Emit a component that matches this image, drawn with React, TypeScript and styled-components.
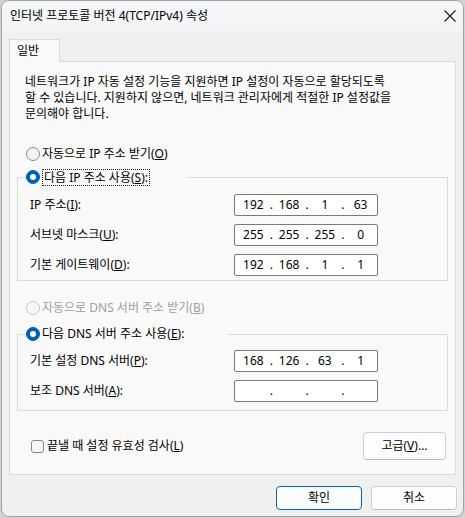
import React from "react";
import styled, { createGlobalStyle } from "styled-components";

const GlobalStyle = createGlobalStyle`
  html, body {
    margin: 0;
    padding: 0;
    background: #ced3ce;
  }
  body {
    font-family: "Noto Sans", "Noto Sans CJK KR", sans-serif;
    font-size: 12px;
    color: #000;
  }
`;

type Address = string[];

interface IpRow {
  label: React.ReactNode;
  value: Address;
}

const ipRows: IpRow[] = [
  { label: <>IP 주소(<u>I</u>):</>, value: ["192", "168", "1", "63"] },
  { label: <>서브넷 마스크(<u>U</u>):</>, value: ["255", "255", "255", "0"] },
  { label: <>기본 게이트웨이(<u>D</u>):</>, value: ["192", "168", "1", "1"] },
];

const dnsRows: IpRow[] = [
  { label: <>기본 설정 DNS 서버(<u>P</u>):</>, value: ["168", "126", "63", "1"] },
  { label: <>보조 DNS 서버(<u>A</u>):</>, value: ["", "", "", ""] },
];

const IpField: React.FC<{ value: Address }> = ({ value }) => (
  <IpBox>
    {value.map((octet, i) => (
      <React.Fragment key={i}>
        <Octet>{octet}</Octet>
        {i < 3 && <Dot>.</Dot>}
      </React.Fragment>
    ))}
  </IpBox>
);

const AddressRows: React.FC<{ rows: IpRow[]; $top: number; $bottom: number }> = ({
  rows,
  $top,
  $bottom,
}) => (
  <RowGrid $top={$top} $bottom={$bottom}>
    {rows.map((row, i) => (
      <React.Fragment key={i}>
        <FieldLabel>{row.label}</FieldLabel>
        <IpField value={row.value} />
      </React.Fragment>
    ))}
  </RowGrid>
);

const App: React.FC = () => {
  return (
    <>
      <GlobalStyle />
      <Window>
        <TitleBar>
          <Title>인터넷 프로토콜 버전 4(TCP/IPv4) 속성</Title>
          <CloseIcon width="12" height="12" viewBox="0 0 12 12">
            <path d="M0.5 0.5 L11.5 11.5 M11.5 0.5 L0.5 11.5" stroke="#1a1a1a" strokeWidth="1.1" fill="none" />
          </CloseIcon>
        </TitleBar>

        <Body>
          <TabStrip>
            <Tab>일반</Tab>
          </TabStrip>

          <Panel>
            <Description>
              <DescLine>네트워크가 IP 자동 설정 기능을 지원하면 IP 설정이 자동으로 할당되도록</DescLine>
              <DescLine>할 수 있습니다. 지원하지 않으면, 네트워크 관리자에게 적절한 IP 설정값을</DescLine>
              <DescLine>문의해야 합니다.</DescLine>
            </Description>

            <RadioRow $top={23}>
              <Radio />
              <span>
                자동으로 IP 주소 받기(<u>O</u>)
              </span>
            </RadioRow>

            <Group $top={5}>
              <GroupLegend $width={161}>
                <RadioRow>
                  <Radio $checked />
                  <FocusText>
                    다음 IP 주소 사용(<u>S</u>):
                  </FocusText>
                </RadioRow>
              </GroupLegend>
              <AddressRows rows={ipRows} $top={8} $bottom={4} />
            </Group>

            <RadioRow $top={18} $disabled>
              <Radio $disabled />
              <span>
                자동으로 DNS 서버 주소 받기(<u>B</u>)
              </span>
            </RadioRow>

            <Group $top={8}>
              <GroupLegend $width={202}>
                <RadioRow>
                  <Radio $checked />
                  <span>
                    다음 DNS 서버 주소 사용(<u>E</u>):
                  </span>
                </RadioRow>
              </GroupLegend>
              <AddressRows rows={dnsRows} $top={7} $bottom={8} />
            </Group>

            <BottomRow>
              <CheckRow>
                <Checkbox />
                <span>
                  끝낼 때 설정 유효성 검사(<u>L</u>)
                </span>
              </CheckRow>
              <Button $width={83} $height={28}>
                고급(<u>V</u>)...
              </Button>
            </BottomRow>
          </Panel>

          <Footer>
            <Button $primary>확인</Button>
            <Button>취소</Button>
          </Footer>
        </Body>
      </Window>
    </>
  );
};

const Window = styled.div`
  box-sizing: border-box;
  width: 463px;
  height: 517px;
  margin-left: 1px;
  border: 1px solid #a3a3a3;
  border-radius: 8px;
  background: #f0f0f0;
  overflow: hidden;
  display: flex;
  flex-direction: column;
`;

const TitleBar = styled.div`
  height: 30px;
  flex: none;
  display: flex;
  align-items: center;
  padding: 0 7px 0 8px;
  background: #f3f5f7;
`;

const Title = styled.div`
  font-size: 12px;
  line-height: 16px;
  color: #000;
`;

const CloseIcon = styled.svg`
  margin-left: auto;
  display: block;
`;

const Body = styled.div`
  padding: 8px 7px 0;
  display: flex;
  flex-direction: column;
`;

const TabStrip = styled.div`
  display: flex;
`;

const Tab = styled.div`
  box-sizing: border-box;
  position: relative;
  width: 51px;
  height: 23px;
  margin-bottom: -1px;
  padding: 3px 0 0 7px;
  border: 1px solid #d9d9d9;
  border-bottom: none;
  background: #f9f9f9;
  line-height: 16px;
`;

const Panel = styled.div`
  box-sizing: border-box;
  height: 414px;
  border: 1px solid #d9d9d9;
  background: #f9f9f9;
  display: flex;
  flex-direction: column;
`;

const Description = styled.div`
  margin: 12px 0 0 15px;
  display: flex;
  flex-direction: column;
`;

const DescLine = styled.div`
  height: 16px;
  line-height: 16px;
  white-space: nowrap;
`;

const RadioRow = styled.label<{ $top?: number; $disabled?: boolean }>`
  display: flex;
  align-items: center;
  gap: 2px;
  height: 18px;
  margin: ${(p) => (p.$top !== undefined ? `${p.$top}px 0 0 16px` : "0")};
  line-height: 16px;
  white-space: nowrap;
  color: ${(p) => (p.$disabled ? "#a0a0a0" : "#000")};
`;

const Radio = styled.span<{ $checked?: boolean; $disabled?: boolean }>`
  box-sizing: border-box;
  flex: none;
  position: relative;
  width: 14px;
  height: 14px;
  border-radius: 50%;
  border: 1px solid
    ${(p) => (p.$checked ? "#005fb8" : p.$disabled ? "#c6c6c6" : "#8a8a8a")};
  background: ${(p) => (p.$checked ? "#005fb8" : p.$disabled ? "#f7f7f7" : "#f3f3f3")};

  &::after {
    content: "";
    display: ${(p) => (p.$checked ? "block" : "none")};
    position: absolute;
    left: 3px;
    top: 3px;
    width: 6px;
    height: 6px;
    border-radius: 50%;
    background: #fff;
  }
`;

const FocusText = styled.span`
  padding: 0 1px;
  border: 1px dotted #222;
  line-height: 15px;
`;

const Group = styled.fieldset<{ $top: number }>`
  margin: ${(p) => p.$top}px 7px 0;
  padding: 0;
  min-width: 0;
  border: 1px solid #dcdcdc;
`;

const GroupLegend = styled.legend<{ $width: number }>`
  box-sizing: border-box;
  width: ${(p) => p.$width}px;
  height: 18px;
  margin-left: 8px;
  padding: 0;

  ${RadioRow} {
    margin: 0;
  }
`;

const RowGrid = styled.div<{ $top: number; $bottom: number }>`
  display: grid;
  grid-template-columns: 204px 144px;
  grid-auto-rows: 22px;
  row-gap: 8px;
  align-items: center;
  padding: ${(p) => `${p.$top}px 0 ${p.$bottom}px 12px`};
`;

const FieldLabel = styled.div`
  line-height: 16px;
  white-space: nowrap;
`;

const IpBox = styled.div`
  box-sizing: border-box;
  height: 22px;
  display: flex;
  align-items: center;
  padding-left: 2px;
  border: 1px solid #7a7a7a;
  border-radius: 2px;
  background: #fff;
  line-height: 16px;
`;

const Octet = styled.span`
  width: 33px;
  text-align: center;
`;

const Dot = styled.span`
  width: 3px;
  display: flex;
  justify-content: center;
`;

const BottomRow = styled.div`
  display: flex;
  align-items: center;
  justify-content: space-between;
  margin-top: 21px;
  padding: 0 9px 0 21px;
`;

const CheckRow = styled.label`
  display: flex;
  align-items: center;
  gap: 3px;
  line-height: 16px;
`;

const Checkbox = styled.span`
  box-sizing: border-box;
  width: 13px;
  height: 13px;
  border: 1px solid #858585;
  border-radius: 3px;
  background: #f6f6f6;
`;

const Button = styled.button<{ $primary?: boolean; $width?: number; $height?: number }>`
  box-sizing: border-box;
  width: ${(p) => p.$width ?? 86}px;
  height: ${(p) => p.$height ?? 24}px;
  padding: 0;
  border: 1px solid ${(p) => (p.$primary ? "#0067c0" : "#d0d0d0")};
  border-bottom-color: ${(p) => (p.$primary ? "#0067c0" : "#bdbdbd")};
  border-radius: 4px;
  background: #fdfdfd;
  font-family: "Noto Sans", "Noto Sans CJK KR", sans-serif;
  font-size: 12px;
  line-height: 16px;
  color: #000;
`;

const Footer = styled.div`
  display: flex;
  justify-content: flex-end;
  gap: 9px;
  margin: 11px -1px 0 0;
`;

export default App;
